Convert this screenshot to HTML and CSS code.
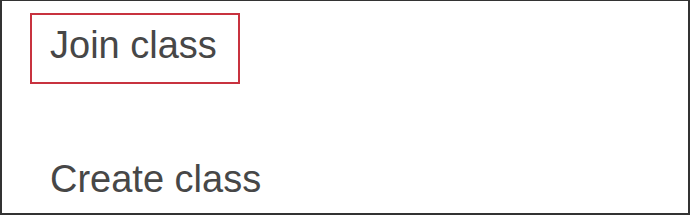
FILE: index.html
```html
<!DOCTYPE html>
<html lang="en">
<head>
    <meta charset="UTF-8">
    <meta name="viewport" content="width=device-width, initial-scale=1.0">
    <title>Classes</title>
    <link rel="stylesheet" href="styles.css">
</head>
<body>
    <div class="sheet">
        <div class="menu">
            <div class="menu-item selected">Join class</div>
            <div class="menu-item">Create class</div>
        </div>
    </div>
</body>
</html>
```

FILE: styles.css
```css
body {
    margin: 0;
    font-family: "Liberation Sans", Arial, sans-serif;
    background-color: white;
}
.sheet {
    width: 690px;
    height: 215px;
    box-sizing: border-box;
    border: 2px solid #333;
    border-top-width: 1px;
    padding: 12px 0 0 28px;
    overflow: hidden;
}
.menu {
    display: flex;
    flex-direction: column;
    align-items: flex-start;
    gap: 63px;
}
.menu-item {
    font-size: 38px;
    line-height: 44px;
    color: #474747;
    white-space: nowrap;
    padding: 8px 18px 15px 18px;
    border: 2px solid transparent;
}
.menu-item.selected {
    width: 210px;
    box-sizing: border-box;
    border-color: #c8323f;
}
```
